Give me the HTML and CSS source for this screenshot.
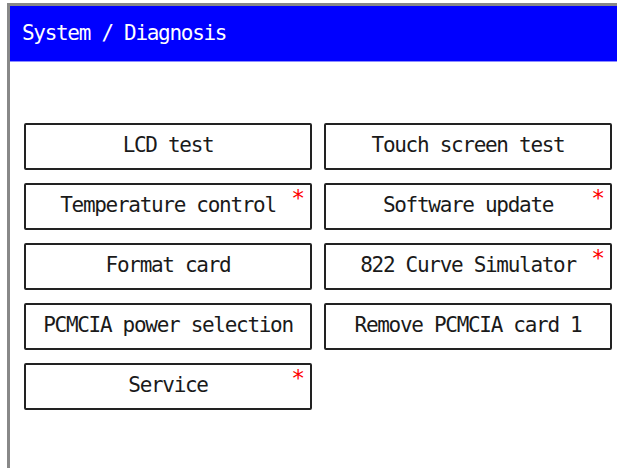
FILE: index.html
```html
<!DOCTYPE html>
<html>
<head>
<meta charset="utf-8">
<link rel="stylesheet" href="styles.css">
</head>
<body>
<div class="frame">
  <div class="titlebar">System / Diagnosis</div>
  <div class="grid">
    <div class="btn">LCD test</div>
    <div class="btn">Touch screen test</div>
    <div class="btn">Temperature control<span class="star">*</span></div>
    <div class="btn">Software update<span class="star">*</span></div>
    <div class="btn">Format card</div>
    <div class="btn">822 Curve Simulator<span class="star">*</span></div>
    <div class="btn">PCMCIA power selection</div>
    <div class="btn">Remove PCMCIA card 1</div>
    <div class="btn">Service<span class="star">*</span></div>
  </div>
</div>
</body>
</html>
```
FILE: styles.css
```css
html, body {
  margin: 0;
  padding: 0;
  background: #fff;
  overflow: hidden;
}
body {
  width: 617px;
  height: 468px;
  font-family: "DejaVu Sans Mono", "Liberation Mono", monospace;
}
.frame {
  margin: 3px 0 0 7px;
  border-top: 3px solid #888;
  border-left: 3px solid #888;
  height: 470px;
  box-sizing: border-box;
}
.titlebar {
  height: 55px;
  background: #0000ff;
  border-bottom: 1px solid #8c8cff;
  color: #fff;
  font-size: 21px;
  letter-spacing: -1.3px;
  line-height: 55px;
  padding-left: 12px;
}
.grid {
  display: grid;
  grid-template-columns: 288px 288px;
  grid-auto-rows: 47px;
  column-gap: 12px;
  row-gap: 13px;
  padding: 61px 0 0 14px;
}
.btn {
  position: relative;
  box-sizing: border-box;
  border: 2px solid #222;
  border-radius: 2px;
  display: flex;
  align-items: center;
  justify-content: center;
  font-size: 21px;
  letter-spacing: -1.3px;
  color: #1a1a1a;
  padding-bottom: 3px;
}
.star {
  position: absolute;
  top: 2px;
  right: 5px;
  color: #ff0000;
  font-size: 23px;
  line-height: 1;
  letter-spacing: 0;
}
```
